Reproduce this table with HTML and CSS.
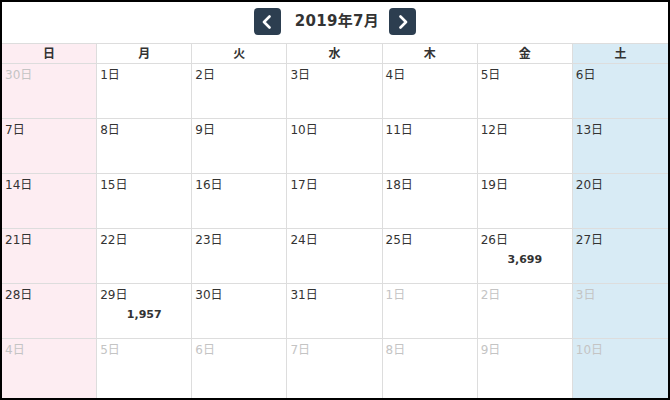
FILE: index.html
```html
<!DOCTYPE html>
<html lang="ja">
<head>
<meta charset="utf-8">
<link rel="stylesheet" href="styles.css">
</head>
<body>
<div class="frame">
  <div class="toolbar">
    <button class="nav"><svg width="12" height="14" viewBox="0 0 12 14"><path d="M8.5 1.5 L3 7 L8.5 12.5" fill="none" stroke="#fff" stroke-width="2.6" stroke-linecap="round" stroke-linejoin="round"/></svg></button>
    <h2 class="title">2019年7月</h2>
    <button class="nav"><svg width="12" height="14" viewBox="0 0 12 14"><path d="M3.5 1.5 L9 7 L3.5 12.5" fill="none" stroke="#fff" stroke-width="2.6" stroke-linecap="round" stroke-linejoin="round"/></svg></button>
  </div>
  <div class="cal">
    <div class="head sun">日</div><div class="head">月</div><div class="head">火</div><div class="head">水</div><div class="head">木</div><div class="head">金</div><div class="head sat">土</div>

    <div class="day sun other">30日</div><div class="day">1日</div><div class="day">2日</div><div class="day">3日</div><div class="day">4日</div><div class="day">5日</div><div class="day sat">6日</div>
    <div class="day sun">7日</div><div class="day">8日</div><div class="day">9日</div><div class="day">10日</div><div class="day">11日</div><div class="day">12日</div><div class="day sat">13日</div>
    <div class="day sun">14日</div><div class="day">15日</div><div class="day">16日</div><div class="day">17日</div><div class="day">18日</div><div class="day">19日</div><div class="day sat">20日</div>
    <div class="day sun">21日</div><div class="day">22日</div><div class="day">23日</div><div class="day">24日</div><div class="day">25日</div><div class="day">26日<span class="val">3,699</span></div><div class="day sat">27日</div>
    <div class="day sun">28日</div><div class="day">29日<span class="val">1,957</span></div><div class="day">30日</div><div class="day">31日</div><div class="day other">1日</div><div class="day other">2日</div><div class="day sat other">3日</div>
    <div class="day sun other">4日</div><div class="day other">5日</div><div class="day other">6日</div><div class="day other">7日</div><div class="day other">8日</div><div class="day other">9日</div><div class="day sat other">10日</div>
  </div>
</div>
</body>
</html>
```
FILE: styles.css
```css
html, body {
  margin: 0;
  padding: 0;
  height: 100%;
  overflow: hidden;
}
body {
  font-family: "DejaVu Sans", "Noto Sans CJK JP", sans-serif;
  color: #333;
  background: #fff;
}
.frame {
  box-sizing: border-box;
  width: 670px;
  height: 400px;
  border: 2px solid #000;
  overflow: hidden;
}
.toolbar {
  height: 41px;
  display: flex;
  align-items: center;
  justify-content: center;
  gap: 10px;
}
.nav {
  width: 27px;
  height: 27px;
  padding: 0;
  border: none;
  border-radius: 4px;
  background: #2c3e50;
  display: flex;
  align-items: center;
  justify-content: center;
  margin-top: -2px;
}
.title {
  margin: -3px 0 0 4px;
  font-size: 15px;
  font-weight: bold;
  letter-spacing: 0.3px;
  color: #333;
  line-height: 20px;
}
.cal {
  display: grid;
  grid-template-columns: repeat(7, 1fr);
  grid-template-rows: 20px repeat(5, 55px) 62px;
  border-top: 1px solid #ddd;
}
.head {
  font-family: "Noto Sans CJK JP", sans-serif;
  font-size: 12px;
  font-weight: bold;
  text-align: center;
  line-height: 18px;
  border-right: 1px solid #ddd;
  border-bottom: 1px solid #ddd;
}
.day {
  font-size: 12px;
  line-height: 16px;
  padding: 3px 3px;
  border-right: 1px solid #ddd;
  border-bottom: 1px solid #ddd;
  display: flex;
  flex-direction: column;
}
.head:nth-child(7n), .day:nth-child(7n) {
  border-right: none;
}
.sun { background: #fdedf2; }
.sat { background: #d8ebf5; }
.other { color: #c4c4c4; }
.val {
  align-self: center;
  font-size: 11px;
  font-weight: bold;
  margin-top: 4px;
}
```
